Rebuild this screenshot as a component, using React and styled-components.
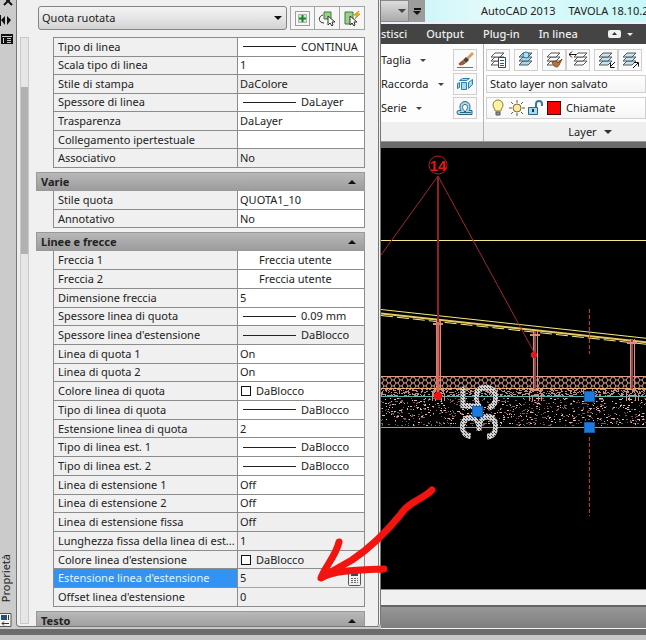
import React from "react"
import styled, { createGlobalStyle } from "styled-components"

const GlobalStyle = createGlobalStyle`
  * {
    box-sizing: border-box;
  }

  body {
    margin: 0;
    font-family: "Noto Sans", "Open Sans", sans-serif;
    font-size: 11px;
    line-height: 16px;
    color: #222;
  }

  button,
  input,
  select {
    margin: 0;
    font: inherit;
    color: inherit;
  }
`

const Shell = styled.div`
  position: relative;
  display: flex;
  flex-direction: column;
  height: 100vh;
  overflow: hidden;
  background: #c8c8c8;
`

const Work = styled.div`
  display: flex;
  flex: 1;
  min-height: 0;
`

const BottomEdge = styled.div`
  height: 11px;
  border-top: 6px solid #6c6c6c;
  background: #c8c8c8;
`

/* palette */

const Strip = styled.div`
  display: flex;
  flex-direction: column;
  justify-content: space-between;
  width: 16px;
  flex-shrink: 0;
  background: #cbcbcb;
`

const StripIcons = styled.div`
  display: flex;
  flex-direction: column;
`

const StripButton = styled.button`
  display: flex;
  width: 14px;
  padding: 0;
  border: 0;
  background: none;
`

const StripTitle = styled.div`
  display: flex;
  flex-direction: column;
  gap: 11px;
`

const Vertical = styled.span`
  width: 12px;
  line-height: 12px;
  writing-mode: vertical-rl;
  transform: rotate(180deg);
`

const Palette = styled.section`
  display: flex;
  gap: 7px;
  width: 365px;
  flex-shrink: 0;
  margin-bottom: 2px;
  padding: 0 13px 0 3px;
  border: 1px solid #777;
  border-top: 0;
  border-right: 3px double #777;
  border-radius: 0 0 4px 4px;
  background: #f0f0f0;
`

const Scrollbar = styled.div`
  display: flex;
  width: 9px;
  margin: 37px 0 2px;
  border: 1px solid #c9c9c9;
  background: #e6e6e6;
`

const Thumb = styled.div`
  width: 100%;
  height: 167px;
  margin-top: 49px;
  background: #b1b1b1;
`

const PaletteBody = styled.div`
  display: flex;
  flex-direction: column;
  gap: 4px;
  flex: 1;
  min-width: 0;
  overflow: hidden;
`

const PaletteBar = styled.div`
  display: flex;
  flex-shrink: 0;
  height: 33px;
  padding: 6px 0 3px 2px;
`

const SelectWrap = styled.div`
  display: flex;
  align-items: center;
  flex: 1;
  min-width: 0;
  margin-right: ${(props) => (props.$ribbon ? 0 : 3)}px;
  padding-right: 4px;
  border: 1px solid ${(props) => (props.$ribbon ? "#d0d0d0" : "#848484")};
  border-radius: ${(props) => (props.$ribbon ? 0 : 3)}px;
  background: ${(props) =>
    props.$ribbon
      ? "linear-gradient(#fff, #f4f4f4)"
      : "linear-gradient(#f3f3f3, #e6e6e6 50%, #d2d2d2)"};
`

const Select = styled.select`
  flex: 1;
  min-width: 0;
  height: 100%;
  padding: 0 3px;
  appearance: none;
  border: 0;
  background: none;
`

const Caret = styled.span`
  border: ${(props) => props.$size || 4}px solid transparent;
  border-bottom-width: 0;
  border-top-color: ${(props) => props.$color || "#111"};
`

const CaretUp = styled.span`
  border: 4px solid transparent;
  border-top-width: 0;
  border-bottom-color: #111;
`

const ToolButton = styled.button`
  display: flex;
  align-items: center;
  justify-content: center;
  width: 25px;
  height: 24px;
  flex-shrink: 0;
  padding: 0;
  border: 1px solid #a5a5a5;
  border-left-width: ${(props) => (props.$joined ? 0 : 1)}px;
  background: #f6f6f6;
`

const SectionHeader = styled.button`
  display: flex;
  align-items: center;
  justify-content: space-between;
  flex-shrink: 0;
  width: 100%;
  height: 19px;
  padding: 0 8px 0 4px;
  border: 1px solid #999;
  background: linear-gradient(#b8b8b8, #9c9c9c);
  font-weight: 700;
`

const Section = styled.div`
  display: flex;
  flex-direction: column;
  flex: ${(props) => props.$rows} 0 ${(props) => (props.$titled ? 19 : 0)}px;
`

/* the last section runs under the lower edge of the palette */
const NextSection = styled.div`
  flex-shrink: 0;
  margin-bottom: -4px;
`

const Rows = styled.div`
  display: flex;
  flex: 1;
  padding-left: 17px;
`

const Grid = styled.table`
  width: 100%;
  table-layout: fixed;
  border-spacing: 0;
  border-left: 1px solid #8c8c8c;
  border-top: ${(props) => (props.$open ? "1px solid #8c8c8c" : 0)};
`

const Label = styled.th`
  width: 184px;
  padding: 0 0 0 4px;
  border-bottom: 1px solid #8c8c8c;
  border-right: 1px solid #8c8c8c;
  background: ${(props) => (props.$active ? "#3393f3" : "#f0f0f0")};
  color: ${(props) => (props.$active ? "#e4f2ff" : "inherit")};
  font-weight: 400;
  text-align: left;
  white-space: nowrap;
`

const Value = styled.td`
  padding: 0 2px;
  border-bottom: 1px solid ${(props) => (props.$active ? "#6fb0e8" : "#8c8c8c")};
  border-right: 1px solid #8c8c8c;
  background: ${(props) => (props.$off ? "#efefef" : "#fff")};
  white-space: nowrap;
`

const Cell = styled.div`
  display: flex;
  align-items: center;
  gap: 5px;
  height: 16px;
  padding-left: ${(props) => props.$indent || 0}px;
`

const LineSample = styled.span`
  width: 53px;
  height: 1px;
  background: #222;
`

const Swatch = styled.span`
  width: 10px;
  height: 10px;
  border: 1px solid #111;
  background: #fff;
`

const ValueInput = styled.input`
  flex: 1;
  min-width: 0;
  height: 16px;
  padding: 0;
  border: 0;
  outline: 0;
  background: none;
`

const CalcButton = styled.button`
  display: flex;
  padding: 0;
  border: 0;
  background: none;
`

/* drawing window */

const Window = styled.main`
  display: flex;
  flex-direction: column;
  flex: 1;
  min-width: 0;
  overflow: hidden;
  background: #f0f0f0;
  white-space: nowrap;
`

const TitleBar = styled.div`
  display: flex;
  flex-shrink: 0;
  height: 24px;
  border-bottom: 2px solid #eef;
  background: linear-gradient(90deg, #c4f4f6, #e2fafa 40%, #c8f8f8);
`

const Title = styled.div`
  display: flex;
  gap: 13px;
  padding: 3px 0 0 56px;
`

const QuickAccess = styled.div`
  display: flex;
  align-items: center;
  justify-content: flex-end;
  width: 28px;
  flex-shrink: 0;
  padding-right: 2px;
  border: 1px solid #8a8a8a;
  border-left: 0;
  background: linear-gradient(#ddd, #aaa);
`

const QuickMenu = styled.button`
  display: flex;
  flex-direction: column;
  align-items: center;
  justify-content: center;
  gap: 1px;
  width: 16px;
  flex-shrink: 0;
  padding: 0;
  border: 0;
  background: #9c9c9c;
`

const QuickBar = styled.span`
  width: 7px;
  height: 2px;
  background: #111;
`

const Tabs = styled.nav`
  display: flex;
  flex-shrink: 0;
  align-items: center;
  gap: 19px;
  height: 20px;
  background: #444;
  color: #eee;
`

const Tab = styled.a`
  color: inherit;
  font-weight: 500;
  text-decoration: none;
`

const TabToggle = styled.button`
  display: flex;
  align-items: center;
  gap: 6px;
  margin-left: 11px;
  padding: 0;
  border: 0;
  background: none;
`

const Ribbon = styled.div`
  display: flex;
  flex-shrink: 0;
  height: 98px;
  border-bottom: 1px solid #999;
  background: #fdfdfd;
`

const Group = styled.div`
  display: flex;
  flex-direction: column;
  justify-content: space-between;
  width: ${(props) => props.$width || "auto"};
  flex: ${(props) => (props.$width ? "none" : 1)};
  min-width: 0;
  overflow: hidden;
  border-right: ${(props) => (props.$width ? "1px solid #b4b4b4" : 0)};
`

const GroupRows = styled.div`
  display: flex;
  flex-direction: column;
  gap: 2px;
  padding: 5px 0 0 ${(props) => props.$left || 0}px;
`

const GroupRow = styled.div`
  display: flex;
  align-items: center;
  height: 22px;
`

const Command = styled.button`
  display: flex;
  align-items: center;
  gap: 9px;
  flex: 1;
  padding: 0;
  border: 0;
  background: none;
`

const IconBox = styled.button`
  display: flex;
  align-items: center;
  justify-content: center;
  width: 24px;
  height: 22px;
  flex-shrink: 0;
  margin-right: ${(props) => props.$gap || 0}px;
  padding: 0;
  border: 1px solid #cfcfcf;
  background: #fafafa;
`

const LayerState = styled.div`
  display: flex;
  align-items: center;
  flex: 1;
  gap: 2px;
  height: 22px;
  padding-left: 2px;
  border: 1px solid #d0d0d0;
  background: linear-gradient(#fff, #f6f6f6);
`

const LayerColor = styled.span`
  width: 14px;
  height: 14px;
  margin: 0 3px 0 1px;
  border: 1px solid #400;
  background: #f00;
`

const GroupTitle = styled.div`
  display: flex;
  align-items: center;
  justify-content: center;
  gap: 7px;
  height: 19px;
  padding-left: 50px;
  background: #efefef;
`

const Canvas = styled.div`
  flex: 1;
  min-height: 0;
  overflow: hidden;
  border-top: 6px solid #6a6a6a;
  background: #000;
`

const CommandLine = styled.div`
  flex-shrink: 0;
  height: 16px;
  border-top: 1px solid #888;
  background: #f0f0f0;
`

const StatusBar = styled.div`
  flex-shrink: 0;
  height: 24px;
  border-top: 2px solid #666;
  border-bottom: 1px solid #f4f4f4;
  background: linear-gradient(#979797, #7e7e7e);
`

const Annotation = styled.svg`
  position: absolute;
  left: 310px;
  top: 480px;
  pointer-events: none;
`

const general = [
  { label: "Tipo di linea", value: "CONTINUA", kind: "line" },
  { label: "Scala tipo di linea", value: "1" },
  { label: "Stile di stampa", value: "DaColore", off: true },
  { label: "Spessore di linea", value: "DaLayer", kind: "line" },
  { label: "Trasparenza", value: "DaLayer" },
  { label: "Collegamento ipertestuale", value: "" },
  { label: "Associativo", value: "No", off: true },
]

const misc = [
  { label: "Stile quota", value: "QUOTA1_10" },
  { label: "Annotativo", value: "No" },
]

const lines = [
  { label: "Freccia 1", value: "Freccia utente", kind: "arrow" },
  { label: "Freccia 2", value: "Freccia utente", kind: "arrow" },
  { label: "Dimensione freccia", value: "5" },
  { label: "Spessore linea di quota", value: "0.09 mm", kind: "line" },
  {
    label: "Spessore linea d'estensione",
    value: "DaBlocco",
    kind: "line",
    off: true,
  },
  { label: "Linea di quota 1", value: "On" },
  { label: "Linea di quota 2", value: "On" },
  { label: "Colore linea di quota", value: "DaBlocco", kind: "color" },
  { label: "Tipo di linea di quota", value: "DaBlocco", kind: "line" },
  { label: "Estensione linea di quota", value: "2" },
  { label: "Tipo di linea est. 1", value: "DaBlocco", kind: "line" },
  { label: "Tipo di linea est. 2", value: "DaBlocco", kind: "line" },
  { label: "Linea di estensione 1", value: "Off" },
  { label: "Linea di estensione 2", value: "Off" },
  { label: "Linea di estensione fissa", value: "Off", off: true },
  { label: "Lunghezza fissa della linea di est...", value: "1", off: true },
  {
    label: "Colore linea d'estensione",
    value: "DaBlocco",
    kind: "color",
    off: true,
  },
  {
    label: "Estensione linea d'estensione",
    value: "5",
    kind: "input",
    off: true,
  },
  { label: "Offset linea d'estensione", value: "0", off: true },
]

const indents = { line: 3, arrow: 19, color: 1 }

const PropertyRow = ({ label, value, kind, off }) => {
  const active = kind === "input"
  return (
    <tr>
      <Label scope="row" $active={active}>
        {label}
      </Label>
      <Value $off={off} $active={active}>
        <Cell $indent={indents[kind]}>
          {kind === "line" && <LineSample />}
          {kind === "color" && <Swatch />}
          {active ? (
            <>
              <ValueInput aria-label={label} defaultValue={value} />
              <CalcButton aria-label="Calcolatrice">
                <svg width="15" height="16">
                  <rect x="1.500" y=".5" width="12" height="15" rx="1" fill="#f0f0f0" stroke="#555" />
                  <path d="M4 4h7" stroke="#445" strokeWidth="4" />
                  <path d="M4 8.500h7M4 10.500h7M4 12.500h7" stroke="#666" strokeDasharray="2 1" />
                </svg>
              </CalcButton>
            </>
          ) : (
            <span>{value}</span>
          )}
        </Cell>
      </Value>
    </tr>
  )
}

const PropertySection = ({ title, rows }) => (
  <Section $rows={rows.length} $titled={Boolean(title)}>
    {title && (
      <SectionHeader>
        {title}
        <CaretUp />
      </SectionHeader>
    )}
    <Rows>
      <Grid $open={!title}>
        <tbody>
          {rows.map((row) => (
            <PropertyRow key={row.label} {...row} />
          ))}
        </tbody>
      </Grid>
    </Rows>
  </Section>
)

const Sheets = ({ children, fill = "#fff", x = 0 }) => (
  <svg width="19" height="18">
    <g stroke="#555" strokeWidth="1" fill={fill} transform={`translate(${x} 0)`}>
      <path d="M2 14l4-4h9l-4 4z" />
      <path d="M2 10l4-4h9l-4 4z" />
      <path d="M2 6l4-4h9l-4 4z" />
    </g>
    {children}
  </svg>
)

// fixed seed, so the gravel stays the same on every render
let seed = 7
const random = () => {
  seed = (seed * 16807) % 2147483647
  return seed / 2147483647
}

const scatter = (count, top, height) =>
  Array.from({ length: count }, () => {
    const x = 381 + Math.floor(random() * 700)
    const y = top + Math.floor(random() * height) + 0.5
    return `M${x} ${y}h${random() > 0.6 ? 2 : 1}`
  }).join("")

const gravel = scatter(1700, 389, 7)
const stones = scatter(1400, 398, 28)
const pebbles = scatter(800, 398, 28)

const Post = ({ x, top }) => (
  <g stroke="#e08a80" fill="none">
    <path d={`M${x} ${top}V390`} stroke="#8c4a48" strokeWidth="2" />
    <path d={`M${x - 2} ${top}V390M${x + 2} ${top}V390`} />
    <path d={`M${x - 5} ${top + 4}h10`} strokeWidth="2" />
    <path d={`M${x - 6} 401v-8l3-4h6l3 4v8M${x - 3} 401v-6h6v6`} />
  </g>
)

const Grip = ({ x, y }) => (
  <rect x={x - 5} y={y - 5} width="10" height="10" fill="#1d7be0" stroke="#0f5cae" />
)

const Drawing = () => (
  <svg width="100%" height="100%" shapeRendering="crispEdges">
    <defs>
      <pattern id="comb" width="8" height="6" patternUnits="userSpaceOnUse" y="377">
        <path d="M0 3h2l2-3h2l2 3M2 3l2 3h2l2-3" stroke="#e0a08c" fill="none" shapeRendering="auto" />
      </pattern>
      <pattern id="mesh" width="3" height="3" patternUnits="userSpaceOnUse">
        <rect width="3" height="3" fill="#d4d4d4" />
        <path d="M0 0h1v1h-1zM2 1h1v1h-1z" fill="#444" />
      </pattern>
    </defs>
    <g transform="translate(-381 -148)">
      <path d="M381 240.500H1400" stroke="#f0e88c" />
      <g stroke="#f6ea80" shapeRendering="auto">
        <path d="M381 309.500L911 367" />
        <path d="M381 313.500L911 371" stroke="#e8c860" strokeWidth="2" />
        <path d="M381 315.500L911 373" strokeDasharray="12 4" />
      </g>
      <rect x="381" y="377" width="1000" height="11" fill="url(#comb)" />
      <path d="M381 376.500H1400" stroke="#e0a08c" />
      <path d="M381 388.500H1400" stroke="#e8b070" />
      <path d={gravel} stroke="#c88a86" />
      <path d={stones} stroke="#7c5a5e" />
      <path d={pebbles} stroke="#e8b4b4" />
      <path d="M381 396.500H1400M381 427.500H1400" stroke="#58b8b2" />
      <Post x={438} top={320} />
      <Post x={535} top={331} />
      <Post x={632} top={339} />
      <g shapeRendering="auto" stroke="#a82434" fill="none">
        <path d="M438 176L381 255M438 176L535 354" />
        <path d="M438 176V322" stroke="#8c2226" strokeWidth="2" />
        <path d="M438 322V392" stroke="#d8685c" strokeWidth="3" />
        <circle cx="438" cy="165" r="9" stroke="#c01820" />
      </g>
      <circle cx="438" cy="396" r="4" fill="#f01010" />
      <circle cx="534" cy="355" r="3" fill="#e01818" />
      <text
        x="438"
        y="171"
        fill="#e01818"
        fontSize="15"
        fontWeight="700"
        textAnchor="middle"
        fontFamily="Liberation Sans, sans-serif"
      >
        14
      </text>
      <path d="M589.500 309V354M589.500 437V516" stroke="#e02438" strokeDasharray="4 2" />
      <text
        transform="translate(497 412) rotate(-90)"
        fill="url(#mesh)"
        stroke="url(#mesh)"
        strokeWidth="1"
        fontSize="52"
        textAnchor="middle"
        fontFamily="Liberation Sans, sans-serif"
      >
        35
      </text>
      <Grip x={477} y={411} />
      <Grip x={589} y={396} />
      <Grip x={589} y={427} />
    </g>
  </svg>
)

const App = () => (
  <Shell>
    <GlobalStyle />
    <Work>
      <Strip>
        <StripIcons>
          <StripButton aria-label="Chiudi">
            <svg width="14" height="12">
              <path d="M4-3l8 8M12-3l-8 8" stroke="#111" strokeWidth="2" />
            </svg>
          </StripButton>
          <StripButton aria-label="Nascondi automaticamente">
            <svg width="14" height="20">
              <path d="M.5 3v11" stroke="#111" />
              <path d="M5 4v9L1 8zM7 4v9l4-5z" fill="#111" />
            </svg>
          </StripButton>
          <StripButton aria-label="Menu">
            <svg width="14" height="14">
              <path d="M1 2h12v10H1z" fill="#111" />
              <path d="M2 4.500h10M7 6.500h4M7 8.500h4M7 10.500h4M3.500 6v5" stroke="#ccc" />
            </svg>
          </StripButton>
        </StripIcons>
        <StripTitle>
          <Vertical>Proprietà</Vertical>
          <svg width="12" height="16">
            <path d="M-1 .5h12v13H-1z" fill="#f4f4f4" stroke="#555" />
            <path d="M1 2h6v5H1z" fill="#24507c" />
            <path d="M8.500 2v5M2 10.500h7M4 8.500l-2 2 2 2" stroke="#333" fill="none" />
          </svg>
        </StripTitle>
      </Strip>
      <Palette aria-label="Proprietà">
        <Scrollbar>
          <Thumb />
        </Scrollbar>
        <PaletteBody>
          <PaletteBar>
            <SelectWrap>
              <Select aria-label="Oggetto selezionato">
                <option>Quota ruotata</option>
              </Select>
              <Caret />
            </SelectWrap>
            <ToolButton aria-label="Attiva PICKADD">
              <svg width="17" height="17">
                <path d="M1.500 1.500h14v14h-14z" fill="none" stroke="#444" strokeDasharray="1 1" />
                <path d="M4.500 4.500h8v8h-8z" fill="#cfe8cf" stroke="#777" strokeDasharray="1 1" />
                <path d="M8.500 5v7M5 8.500h7" stroke="#0b8a22" strokeWidth="2" />
              </svg>
            </ToolButton>
            <ToolButton $joined aria-label="Seleziona oggetti">
              <svg width="18" height="17">
                <path d="M6 2h7v7H6z" fill="#9ccf8c" stroke="#3d7a3a" />
                <path d="M5 5c-5 1-5 8 1 8" stroke="#333" fill="none" />
                <path d="M10 6v9l2-2 2 3 1-1-1-3h3z" fill="#fff" stroke="#333" />
              </svg>
            </ToolButton>
            <ToolButton $joined aria-label="Selezione rapida">
              <svg width="18" height="17">
                <path d="M2 2h8v12H2z" fill="#9ccf8c" stroke="#3d7a3a" />
                <path d="M16 1l-5 4h3l-2 4 5-5h-3z" fill="#f4c430" stroke="#c8961b" />
                <path d="M7 6v9l2-2 2 3 1-1-1-3h3z" fill="#fff" stroke="#333" />
              </svg>
            </ToolButton>
          </PaletteBar>
          <PropertySection rows={general} />
          <PropertySection title="Varie" rows={misc} />
          <PropertySection title="Linee e frecce" rows={lines} />
          <NextSection>
            <SectionHeader>
              Testo
              <CaretUp />
            </SectionHeader>
          </NextSection>
        </PaletteBody>
      </Palette>
      <Window>
        <TitleBar>
          <QuickAccess>
            <Caret $color="#444" />
          </QuickAccess>
          <QuickMenu aria-label="Personalizza barra di accesso rapido">
            <QuickBar />
            <Caret />
          </QuickMenu>
          <Title>
            <span>AutoCAD 2013</span>
            <span>TAVOLA 18.10.2013</span>
          </Title>
        </TitleBar>
        <Tabs>
          <Tab href="#gestisci">stisci</Tab>
          <Tab href="#output">Output</Tab>
          <Tab href="#plugin">Plug-in</Tab>
          <Tab href="#inlinea">In linea</Tab>
          <TabToggle aria-label="Riduci barra multifunzione">
            <svg width="13" height="8">
              <rect width="13" height="8" rx="2" fill="#f0f0f0" />
              <path d="M4 5h5L6.500 2z" fill="#333" />
            </svg>
            <Caret $size={3} $color="#eee" />
          </TabToggle>
        </Tabs>
        <Ribbon>
          <Group $width="103px">
            <GroupRows>
              <GroupRow>
                <Command>
                  Taglia <Caret $size={3} $color="#444" />
                </Command>
                <IconBox $gap={6} aria-label="Cancella">
                  <svg width="18" height="18">
                    <path d="M17 2l-6 6" stroke="#d9a05c" strokeWidth="3" />
                    <path d="M10 6l3 3-3 3-3-3z" fill="#444" />
                    <path d="M7 9l3 3-3 2c-3 1-5 0-4-2z" fill="#9c5a3c" />
                    <path d="M1 16.500h16" stroke="#c05040" />
                  </svg>
                </IconBox>
              </GroupRow>
              <GroupRow>
                <Command>
                  Raccorda <Caret $size={3} $color="#444" />
                </Command>
                <IconBox $gap={6} aria-label="Esplodi">
                  <svg width="18" height="18">
                    <g fill="#9fdcf4" stroke="#2f7fa8">
                      <path d="M5.500 7.500h5v7h-5z" />
                      <path d="M3.500 5.500l3-2h7l-3 2z" />
                      <path d="M1.500 8.500l2-1v5l-2 1zM12.500 7.500l4-3v5l-4 4z" />
                    </g>
                  </svg>
                </IconBox>
              </GroupRow>
              <GroupRow>
                <Command>
                  Serie <Caret $size={3} $color="#444" />
                </Command>
                <IconBox $gap={6} aria-label="Offset">
                  <svg width="18" height="18">
                    <path
                      d="M3 15.500h13v-4h-3c1-1 1-2 1-4a5 5 0 0 0-10 0c0 2 0 3 1 4H3a2 2 0 0 0 0 4z"
                      stroke="#2c6680"
                      fill="#a8d8ee"
                    />
                    <path
                      d="M4 13.500h5l-1-2c-2-2-2-6 1-6s3 4 1 6l-1 2h6"
                      stroke="#2c6680"
                      fill="#fff"
                    />
                  </svg>
                </IconBox>
              </GroupRow>
            </GroupRows>
            <GroupTitle />
          </Group>
          <Group>
            <GroupRows $left={2}>
              <GroupRow>
                <IconBox $gap={4} aria-label="Proprietà layer">
                  <Sheets>
                    <path d="M9.500 6.500h7v10h-7z" fill="#fff" stroke="#345" />
                    <path d="M11 9.500h4M11 12.500h4M11 14.500h4" stroke="#357" />
                  </Sheets>
                </IconBox>
                <IconBox $gap={4} aria-label="Rendi corrente">
                  <Sheets fill="#a8d8f0">
                    <circle cx="9" cy="4" r="3" fill="#a8e0f8" stroke="#2878a0" />
                  </Sheets>
                </IconBox>
                <IconBox aria-label="Corrispondenza layer">
                  <Sheets>
                    <path d="M7 11l4-1 2 2 4-4-3 6c-1 3-5 3-7-3z" fill="#b8743c" stroke="#7a4820" />
                  </Sheets>
                </IconBox>
                <IconBox $gap={4} aria-label="Layer precedente">
                  <Sheets x={3}>
                    <path d="M0 3.500h7M3 .5l-3 3 3 3" fill="none" stroke="#111" />
                  </Sheets>
                </IconBox>
                <IconBox aria-label="Isola">
                  <Sheets fill="#c4e4f4">
                    <path d="M18 11l-5 5M13.500 12v4.500h4" fill="none" stroke="#111" />
                  </Sheets>
                </IconBox>
                <IconBox $gap={4} aria-label="Annulla isolamento">
                  <Sheets fill="#c4e4f4">
                    <path d="M12 17l5-5M13 11.500h4.500v4" fill="none" stroke="#111" />
                  </Sheets>
                </IconBox>
                <IconBox aria-label="Congela" />
              </GroupRow>
              <GroupRow>
                <SelectWrap $ribbon>
                  <Select aria-label="Stato layer">
                    <option>Stato layer non salvato</option>
                  </Select>
                </SelectWrap>
              </GroupRow>
              <GroupRow>
                <LayerState>
                  <svg width="18" height="18">
                    <path d="M6 12c0-3-2-3-2-6a5 5 0 0 1 10 0c0 3-2 3-2 6z" fill="#fff3a0" stroke="#8a7a40" />
                    <path d="M7 13h4v3H7z" fill="#999" stroke="#555" />
                  </svg>
                  <svg width="16" height="18">
                    <circle cx="8" cy="9" r="4" fill="#fbe9a0" stroke="#7a6a40" />
                    <path
                      d="M8 1v3M8 14v3M0 9h3M13 9h3M2 3l2 2M12 13l2 2M14 3l-2 2M4 13l-2 2"
                      stroke="#665c3c"
                    />
                  </svg>
                  <svg width="17" height="18">
                    <path d="M9 9V5c0-4 6-4 6 0v2" fill="none" stroke="#3c7898" strokeWidth="2" />
                    <path d="M1.500 8.500h9v7h-9z" fill="#a4daf0" stroke="#2c6888" />
                    <path d="M6 10v3" stroke="#234" strokeWidth="2" />
                  </svg>
                  <LayerColor />
                  Chiamate
                </LayerState>
              </GroupRow>
            </GroupRows>
            <GroupTitle>
              Layer <Caret $color="#333" />
            </GroupTitle>
          </Group>
        </Ribbon>
        <Canvas>
          <Drawing />
        </Canvas>
        <CommandLine />
        <StatusBar />
      </Window>
    </Work>
    <BottomEdge />
    <Annotation width="130" height="110" fill="none" stroke="#f4140f" strokeLinecap="round" strokeLinejoin="round">
      <path d="M122 10C112 20 98 22 91 34C78 50 60 68 42 80L12 97" strokeWidth="7" />
      <path d="M29 62C26 76 14 88 11 98C24 90 50 90 74 89" strokeWidth="7" />
    </Annotation>
  </Shell>
)

export default App
